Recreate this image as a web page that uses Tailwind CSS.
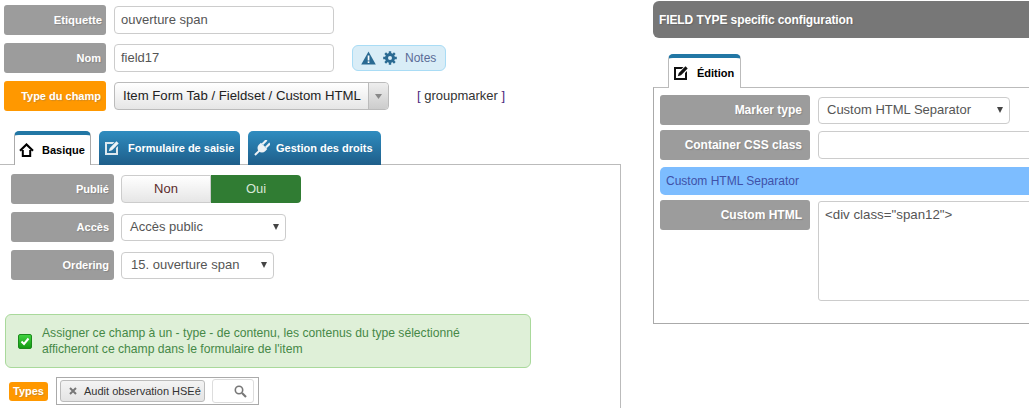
<!DOCTYPE html>
<html lang="fr">
<head>
<meta charset="UTF-8">
<title>Field</title>
<script src="https://cdn.jsdelivr.net/npm/@tailwindcss/browser@4"></script>
</head>
<body class="bg-white overflow-hidden font-['Liberation_Sans',Arial,sans-serif] text-[13px] text-[#555]">
<div class="flex w-[1029px] h-[408px] overflow-hidden">

  <!-- left column -->
  <div class="w-[653px] shrink-0 pl-[4px] pt-[5px]">
    <div class="flex flex-col gap-[8px]">
      <div class="flex items-center h-[30px]">
        <div class="w-[102px] h-[30px] rounded-[3px] bg-[#9c9c9c] text-white font-bold text-[11.300px] flex items-center justify-end pr-[4px] [text-shadow:1px_1px_1px_#858585]">Etiquette</div>
        <div class="ml-[8px] w-[220px] h-[28px] bg-white border border-[#ccc] rounded-[4px] pl-[6px] flex items-center">ouverture span</div>
      </div>
      <div class="flex items-center h-[30px]">
        <div class="w-[102px] h-[30px] rounded-[3px] bg-[#9c9c9c] text-white font-bold text-[11px] flex items-center justify-end pr-[5px] [text-shadow:1px_1px_1px_#858585]">Nom</div>
        <div class="ml-[8px] w-[220px] h-[28px] bg-white border border-[#ccc] rounded-[4px] pl-[6px] flex items-center">field17</div>
        <div class="ml-[18px] w-[94px] h-[26px] bg-[#d9edf7] border border-[#a9dcf5] rounded-[6px] flex items-center pl-[8px] text-[12px] text-[#5a6b96]">
          <svg width="15" height="14" viewBox="0 0 15 14"><path d="M7.500 0.500 L14.800 13.500 H0.200 Z" fill="#2a6a92"/><rect x="6.700" y="4.500" width="1.700" height="5" fill="#fff"/><rect x="6.700" y="10.300" width="1.700" height="1.700" fill="#fff"/></svg>
          <svg class="ml-[7px]" width="14" height="14" viewBox="0 0 14 14"><path d="M7 3.500a3.500 3.500 0 1 0 0 7 3.500 3.500 0 0 0 0-7z" fill="none" stroke="#2a6a92" stroke-width="3"/><path d="M7 0.200v2.600M7 11.200v2.600M0.200 7h2.600M11.200 7h2.600M2.200 2.200l1.800 1.800M10 10l1.800 1.800M11.800 2.200L10 4M4 10l-1.800 1.800" stroke="#2a6a92" stroke-width="2.400"/></svg>
          <span class="ml-[8px]">Notes</span>
        </div>
      </div>
      <div class="flex items-center h-[30px]">
        <div class="w-[102px] h-[30px] rounded-[3px] bg-[#ff9800] text-white font-bold text-[11px] flex items-center justify-end pr-[5px] [text-shadow:1px_1px_1px_#d08a20]">Type du champ</div>
        <div class="ml-[8px] w-[275px] h-[28px] border border-[#bbb] rounded-[4px] bg-gradient-to-b from-white to-[#e6e6e6] flex items-center text-[#222]">
          <span class="pl-[8px] flex-1 whitespace-nowrap text-[13.200px]">Item Form Tab / Fieldset / Custom HTML</span>
          <span class="w-[20px] h-full border-l border-[#bbb] bg-gradient-to-b from-[#eee] to-[#ccc] rounded-r-[4px] flex items-center justify-center">
            <svg width="7" height="5" viewBox="0 0 7 5"><path d="M0 0h7L3.500 5z" fill="#888"/></svg>
          </span>
        </div>
        <span class="ml-[28px] text-[#333]"><span class="text-[#4b2a80]">[</span> groupmarker <span class="text-[#4b2a80]">]</span></span>
      </div>
    </div>

    <!-- tabs -->
    <div class="flex items-end gap-[8px] pl-[10px] mt-[20px] h-[34px] relative z-10">
      <div class="w-[77px] h-[34px] bg-white border border-b-0 border-[#aaa] border-t-[4px] border-t-[#2277a5] rounded-t-[5px] flex items-center pl-[4px] text-[11px] font-bold text-black">
        <svg width="15" height="14" viewBox="0 0 15 14"><path d="M1 7.800 L7.500 1.500 L14 7.800" fill="none" stroke="#000" stroke-width="2.200"/><path d="M3.800 7v6h7.400V7" fill="none" stroke="#000" stroke-width="2"/></svg>
        <span class="ml-[8px]">Basique</span>
      </div>
      <div class="w-[141px] h-[34px] bg-gradient-to-b from-[#2f8dc0] to-[#1e5e8a] rounded-t-[5px] flex items-center pl-[6px] text-[11px] font-bold text-white">
        <svg width="14" height="14" viewBox="0 0 14 14"><path d="M0 1h9.500l-2 2H2v9h9V7l2-2v9H0z" fill="#dde8ef"/><path d="M3.800 10.200l1-3.200L11.500 0.300l2.200 2.200L7 9.200z" fill="#eef3f6"/></svg>
        <span class="ml-[9px]">Formulaire de saisie</span>
      </div>
      <div class="w-[133px] h-[34px] bg-gradient-to-b from-[#2f8dc0] to-[#1e5e8a] rounded-t-[5px] flex items-center pl-[6px] text-[11px] font-bold text-white">
        <svg width="16" height="16" viewBox="0 0 16 16"><g transform="rotate(45 8 8)" fill="#eef2f5"><rect x="4.500" y="-1" width="2.200" height="6"/><rect x="9.300" y="-1" width="2.200" height="6"/><path d="M3.500 5h9v3a4.500 4.500 0 0 1-9 0z"/><rect x="7" y="11" width="2" height="7"/></g></svg>
        <span class="ml-[6px]">Gestion des droits</span>
      </div>
    </div>

    <!-- tab panel -->
    <div class="-ml-[4px] w-[621px] h-[250px] border-t border-r border-[#bbb] -mt-px pt-[9px] pl-[11px]">
      <div class="flex flex-col gap-[8px]">
        <div class="flex items-center h-[30px]">
          <div class="w-[103px] h-[30px] rounded-[3px] bg-[#9c9c9c] text-white font-bold text-[11px] flex items-center justify-end pr-[5px] [text-shadow:1px_1px_1px_#858585]">Publié</div>
          <div class="ml-[7px] flex h-[28px] w-[180px]">
            <div class="w-[90px] border border-[#ccc] rounded-l-[4px] bg-gradient-to-b from-white to-[#e6e6e6] flex items-center justify-center text-[#5b2b2b]">Non</div>
            <div class="w-[90px] bg-[#307c33] rounded-r-[4px] flex items-center justify-center text-[#d8e8d8]">Oui</div>
          </div>
        </div>
        <div class="flex items-center h-[30px]">
          <div class="w-[103px] h-[30px] rounded-[3px] bg-[#9c9c9c] text-white font-bold text-[11px] flex items-center justify-end pr-[5px] [text-shadow:1px_1px_1px_#858585]">Accès</div>
          <div class="ml-[7px] w-[165px] h-[27px] border border-[#ccc] rounded-[4px] pl-[8px] pr-[6px] flex items-center justify-between">Accès public<svg width="6" height="6" viewBox="0 0 6 6"><path d="M0 0h6L3 6z" fill="#444"/></svg></div>
        </div>
        <div class="flex items-center h-[30px]">
          <div class="w-[103px] h-[30px] rounded-[3px] bg-[#9c9c9c] text-white font-bold text-[11px] flex items-center justify-end pr-[5px] [text-shadow:1px_1px_1px_#858585]">Ordering</div>
          <div class="ml-[7px] w-[153px] h-[27px] border border-[#ccc] rounded-[4px] pl-[9px] pr-[6px] flex items-center justify-between">15. ouverture span<svg width="6" height="6" viewBox="0 0 6 6"><path d="M0 0h6L3 6z" fill="#444"/></svg></div>
        </div>
      </div>

      <div class="-ml-[6px] mt-[34px] w-[526px] h-[54px] bg-[#dff0d8] border border-[#a9d99b] rounded-[6px] flex items-center pl-[12px] text-[12.150px] leading-[16px] text-[#468847]">
        <span class="w-[14px] h-[15px] rounded-[2px] bg-gradient-to-b from-[#3fd23f] to-[#119a11] border border-[#1b8a1b] flex items-center justify-center shrink-0">
          <svg width="10" height="9" viewBox="0 0 10 9"><path d="M1.500 4.500l2.500 2.500 4.500-5.500" fill="none" stroke="#fff" stroke-width="2"/></svg>
        </span>
        <span class="ml-[10px]">Assigner ce champ à un - type - de contenu, les contenus du type sélectionné<br>afficheront ce champ dans le formulaire de l'item</span>
      </div>

      <div class="flex items-center mt-[9px] -ml-[2px]">
        <span class="w-[39px] h-[19px] rounded-[3px] bg-[#ff9800] text-white font-bold text-[11px] flex items-center justify-center [text-shadow:1px_1px_1px_#d08a20]">Types</span>
        <div class="ml-[8px] w-[203px] h-[28px] border border-[#aaa] flex items-center pl-[3px]">
          <span class="w-[145px] h-[22px] border border-[#bbb] rounded-[3px] bg-gradient-to-b from-[#f4f4f4] to-[#e4e4e4] flex items-center pl-[8px] text-[11px] text-[#333] whitespace-nowrap">
            <svg width="8" height="8" viewBox="0 0 8 8"><path d="M1 1l6 6M7 1l-6 6" stroke="#777" stroke-width="2"/></svg>
            <span class="ml-[7px]">Audit observation HSEé</span>
          </span>
          <span class="ml-[7px] w-[42px] h-[24px] border border-[#ddd] rounded-[3px] flex items-center justify-end pr-[6px]">
            <svg width="13" height="13" viewBox="0 0 13 13"><circle cx="5" cy="5" r="3.700" fill="none" stroke="#777" stroke-width="1.600"/><path d="M8 8l4 4" stroke="#777" stroke-width="2.200"/></svg>
          </span>
        </div>
      </div>
    </div>
  </div>

  <!-- right column -->
  <div class="flex-1 min-w-0 pt-px">
    <div class="h-[37px] w-full bg-[#777] rounded-l-[6px] flex items-center pl-[6px] text-white font-bold text-[12px] tracking-[-0.100px] [text-shadow:1px_1px_1px_#666] whitespace-nowrap">FIELD TYPE specific configuration</div>
    <div class="pl-[15px] mt-[16px] h-[34px] relative z-10">
      <div class="w-[73px] h-[34px] bg-white border border-b-0 border-[#bbb] border-t-[4px] border-t-[#2277a5] rounded-t-[5px] flex items-center pl-[5px] text-[11px] font-bold text-black">
        <svg width="14" height="14" viewBox="0 0 14 14"><path d="M0 1h9.500l-2 2H2v9h9V7l2-2v9H0z" fill="#111"/><path d="M3.800 10.200l1-3.200L11.500 0.300l2.200 2.200L7 9.200z" fill="#111"/></svg>
        <span class="ml-[9px]">Édition</span>
      </div>
    </div>
    <div class="h-[237px] w-[390px] border border-[#aaa] border-t-[#bbb] -mt-px pt-[7px] pl-[6px]">
      <div class="flex items-center h-[30px]">
        <div class="w-[150px] h-[30px] rounded-[3px] bg-[#9c9c9c] text-white font-bold text-[12px] flex items-center justify-end pr-[8px] [text-shadow:1px_1px_1px_#858585]">Marker type</div>
        <div class="ml-[8px] w-[192px] h-[27px] border border-[#ccc] rounded-[4px] pl-[8px] pr-[6px] flex items-center justify-between">Custom HTML Separator<svg width="6" height="6" viewBox="0 0 6 6"><path d="M0 0h6L3 6z" fill="#444"/></svg></div>
      </div>
      <div class="flex items-center h-[30px] mt-[5px]">
        <div class="w-[150px] h-[30px] rounded-[3px] bg-[#9c9c9c] text-white font-bold text-[12px] flex items-center justify-end pr-[8px] [text-shadow:1px_1px_1px_#858585]">Container CSS class</div>
        <div class="ml-[8px] w-[220px] h-[28px] border border-[#ccc] rounded-[4px]"></div>
      </div>
      <div class="h-[28px] w-[380px] mt-[7px] bg-[#7dbdff] rounded-l-[5px] flex items-center pl-[6px] text-[12px] text-[#3f51a8]">Custom HTML Separator</div>
      <div class="flex items-start mt-[5px]">
        <div class="w-[150px] h-[30px] rounded-[3px] bg-[#9c9c9c] text-white font-bold text-[12px] flex items-center justify-end pr-[8px] [text-shadow:1px_1px_1px_#858585]">Custom HTML</div>
        <div class="ml-[8px] mt-px w-[220px] h-[100px] border border-[#ccc] rounded-[3px] pl-[6px] pt-[5px] text-[13.300px] leading-[16px]">&lt;div class="span12"&gt;</div>
      </div>
    </div>
  </div>
</div>
</body>
</html>
